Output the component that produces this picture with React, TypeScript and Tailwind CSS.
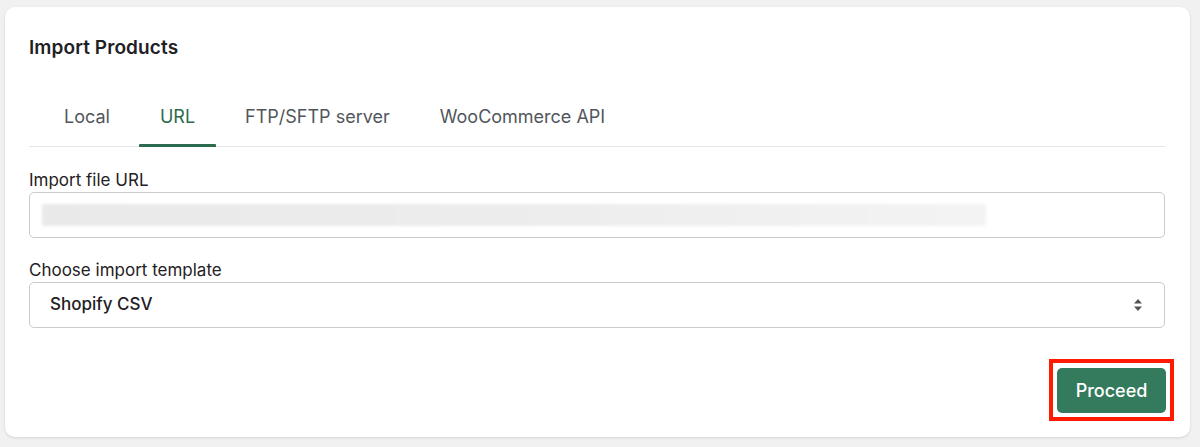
import React from 'react';

const tabs = ['Local', 'URL', 'FTP/SFTP server', 'WooCommerce API'];

const App = () => {
  const active = 'URL';

  return (
    <div
      className="w-[1200px] h-[447px] bg-[#f1f1f2] pt-[7px] pl-[5px] pr-[10px] pb-[10px] text-[#1f2124]"
      style={{ fontFamily: 'Inter, "Noto Sans", sans-serif' }}
    >
      <div className="h-[430px] bg-white rounded-[10px] shadow-[0_1px_3px_rgba(0,0,0,0.12)] pl-[24px] pr-[25px]">
        <h1 className="pt-[29px] text-[19px] leading-[24px] font-semibold tracking-[0.1px]">
          Import Products
        </h1>

        <div className="mt-[46px] flex border-b border-[#e4e5e7] pl-[10px]">
          {tabs.map((tab) => (
            <div
              key={tab}
              className={
                tab === active
                  ? 'relative px-[25px] pb-[18px] text-[18px] leading-[22px] text-[#2d6b4f]'
                  : 'relative px-[25px] pb-[18px] text-[18px] leading-[22px] text-[#51565c]'
              }
            >
              {tab}
              {tab === active && (
                <span className="absolute left-[4px] right-[4px] -bottom-[1px] h-[3px] rounded-t-[1px] bg-[#2d6b4f]" />
              )}
            </div>
          ))}
        </div>

        <div className="mt-[22px] text-[17px] leading-[22px]">Import file URL</div>
        <div className="mt-[1px] h-[46px] border border-[#c9cbce] rounded-[5px] flex items-center px-[12px]">
          <div className="h-[22px] w-[944px] rounded-[2px] bg-gradient-to-r from-[#e9e9ea] via-[#ececec] to-[#f3f3f3] blur-[1.5px]" />
        </div>

        <div className="mt-[21px] text-[17px] leading-[22px]">Choose import template</div>
        <div className="mt-[1px] h-[46px] border border-[#c9cbce] rounded-[5px] flex items-center justify-between pl-[20px] pr-[21px]">
          <span className="text-[17px] font-medium text-[#1f2124]">Shopify CSV</span>
          <svg width="10" height="14" viewBox="0 0 10 14" className="text-[#50555b]">
            <path d="M5 1 L9 5.5 H1 Z" fill="currentColor" />
            <path d="M5 13 L9 8.5 H1 Z" fill="currentColor" />
          </svg>
        </div>

        <div className="mt-[31px] flex justify-end">
          <div className="border-[4px] border-[#ff1a00] pt-[5px] pb-[4px] px-[4px] -mr-[9px]">
            <button className="h-[45px] w-[109px] rounded-[5px] bg-[#347a5c] text-white text-[18px] font-medium">
              Proceed
            </button>
          </div>
        </div>
      </div>
    </div>
  );
};

export default App;
